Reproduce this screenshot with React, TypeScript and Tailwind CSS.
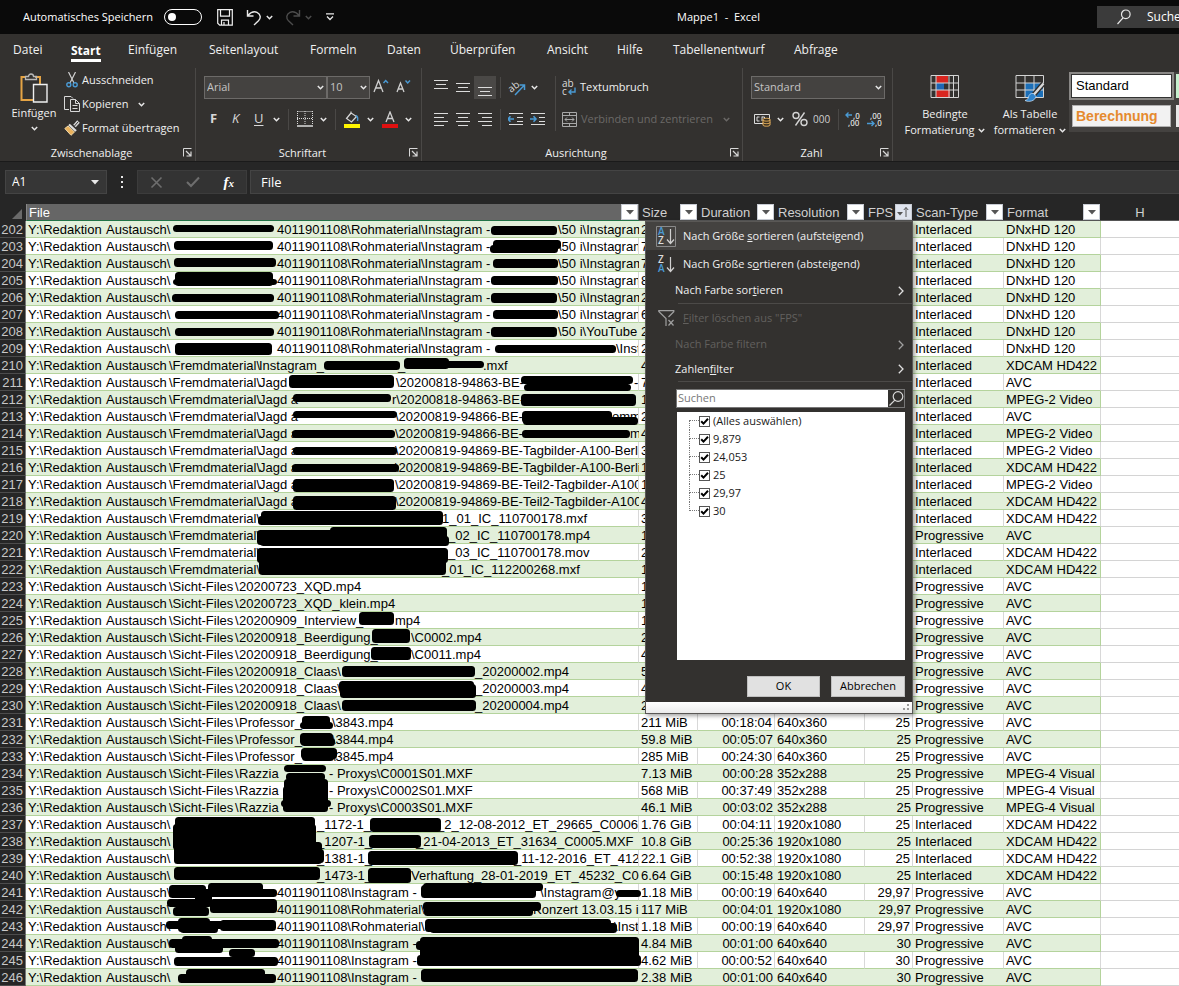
import { useState, type ReactNode } from "react";

/* ------------------------------------------------------------------ */
/* Data                                                                */
/* ------------------------------------------------------------------ */

// A path is kept as parts; the number is the x position a part starts at.
type Part = [number, string];
type Row = {
  n: number;
  file: Part[];
  size: string;
  dur?: string;
  res?: string;
  fps?: string;
  scan: string;
  format: string;
};

const DRIVE: Part = [28, "Y:\\Redaktion"];
const ROOT: Part[] = [DRIVE, [106, "Austausch\\"]];
const FREMD: Part[] = [DRIVE, [106, "Austausch"], [169, "\\Fremdmaterial\\"]];
const SICHT: Part[] = [DRIVE, [106, "Austausch"], [169, "\\Sicht-Files"], [235, "\\"]];
const CLIP: Part[] = [...ROOT, [277, "4011901108\\Rohmaterial"], [421, "\\Instagram -"]];
const INSTA: Part[] = [...ROOT, [277, "4011901108\\Instagram -"]];

const I = "Interlaced";
const P = "Progressive";
const DNX = "DNxHD 120";
const XD = "XDCAM HD422";
const MP2 = "MPEG-2 Video";
const MP4 = "MPEG-4 Visual";

const rows: Row[] = [
  { n: 202, file: [...CLIP, [558, "\\50 i\\Instagram"]], size: "2", scan: I, format: DNX },
  { n: 203, file: [...CLIP, [558, "\\50 i\\Instagram"]], size: "7", scan: I, format: DNX },
  { n: 204, file: [...CLIP, [558, "\\50 i\\Instagram"]], size: "7", scan: I, format: DNX },
  { n: 205, file: [...CLIP, [558, "\\50 i\\Instagram"]], size: "8", scan: I, format: DNX },
  { n: 206, file: [...CLIP, [558, "\\50 i\\Instagram"]], size: "2", scan: I, format: DNX },
  { n: 207, file: [...CLIP, [558, "\\50 i\\Instagram"]], size: "6", scan: I, format: DNX },
  { n: 208, file: [...CLIP, [558, "\\50 i\\YouTube"]], size: "2", scan: I, format: DNX },
  { n: 209, file: [...CLIP, [616, "\\Inst"]], size: "2", scan: I, format: DNX },
  { n: 210, file: [...FREMD, [259, "Instagram_"], [398, "_"], [483, ".mxf"]], size: "4", scan: I, format: XD },
  { n: 211, file: [...FREMD, [259, "Jagd"], [396, "\\20200818-94863-BE-"], [634, "-"]], size: "7", scan: I, format: "AVC" },
  { n: 212, file: [...FREMD, [259, "Jagd a"], [392, "r\\20200818-94863-BE-"], [633, "'"]], size: "1", scan: I, format: MP2 },
  { n: 213, file: [...FREMD, [259, "Jagd a"], [395, "\\20200819-94866-BE-"], [612, "omm"]], size: "2", scan: I, format: "AVC" },
  { n: 214, file: [...FREMD, [259, "Jagd a"], [395, "\\20200819-94866-BE-"], [630, "m"]], size: "4", scan: I, format: MP2 },
  { n: 215, file: [...FREMD, [259, "Jagd a"], [395, "\\20200819-94869-BE-Tagbilder-A100-Berli"]], size: "3", scan: I, format: MP2 },
  { n: 216, file: [...FREMD, [259, "Jagd a"], [395, "\\20200819-94869-BE-Tagbilder-A100-Berli"]], size: "1", scan: I, format: XD },
  { n: 217, file: [...FREMD, [259, "Jagd a"], [395, "\\20200819-94869-BE-Teil2-Tagbilder-A100"]], size: "1", scan: I, format: MP2 },
  { n: 218, file: [...FREMD, [259, "Jagd a"], [395, "\\20200819-94869-BE-Teil2-Tagbilder-A100"]], size: "4", scan: I, format: XD },
  { n: 219, file: [...FREMD, [442, "1_01_IC_110700178.mxf"]], size: "3", scan: I, format: XD },
  { n: 220, file: [...FREMD, [448, "_02_IC_110700178.mp4"]], size: "1", scan: P, format: "AVC" },
  { n: 221, file: [...FREMD, [448, "_03_IC_110700178.mov"]], size: "2", scan: I, format: XD },
  { n: 222, file: [...FREMD, [442, "_01_IC_112200268.mxf"]], size: "1", scan: I, format: XD },
  { n: 223, file: [...SICHT, [239, "20200723_XQD.mp4"]], size: "1", scan: P, format: "AVC" },
  { n: 224, file: [...SICHT, [239, "20200723_XQD_klein.mp4"]], size: "1", scan: P, format: "AVC" },
  { n: 225, file: [...SICHT, [239, "20200909_Interview_"], [395, "mp4"]], size: "1", scan: P, format: "AVC" },
  { n: 226, file: [...SICHT, [239, "20200918_Beerdigung_"], [411, "\\C0002.mp4"]], size: "2", scan: P, format: "AVC" },
  { n: 227, file: [...SICHT, [239, "20200918_Beerdigung_"], [411, "\\C0011.mp4"]], size: "4", scan: P, format: "AVC" },
  { n: 228, file: [...SICHT, [239, "20200918_Claas\\"], [475, "_20200002.mp4"]], size: "5", scan: P, format: "AVC" },
  { n: 229, file: [...SICHT, [239, "20200918_Claas\\"], [475, "_20200003.mp4"]], size: "4", scan: P, format: "AVC" },
  { n: 230, file: [...SICHT, [239, "20200918_Claas\\"], [475, "_20200004.mp4"]], size: "2", scan: P, format: "AVC" },
  { n: 231, file: [...SICHT, [239, "Professor_"], [332, "\\3843.mp4"]], size: "211 MiB", dur: "00:18:04", res: "640x360", fps: "25", scan: P, format: "AVC" },
  { n: 232, file: [...SICHT, [239, "Professor_"], [332, "\\3844.mp4"]], size: "59.8 MiB", dur: "00:05:07", res: "640x360", fps: "25", scan: P, format: "AVC" },
  { n: 233, file: [...SICHT, [239, "Professor_"], [332, "\\3845.mp4"]], size: "285 MiB", dur: "00:24:30", res: "640x360", fps: "25", scan: P, format: "AVC" },
  { n: 234, file: [...SICHT, [239, "Razzia"], [329, "- Proxys\\C0001S01.MXF"]], size: "7.13 MiB", dur: "00:00:28", res: "352x288", fps: "25", scan: P, format: MP4 },
  { n: 235, file: [...SICHT, [239, "Razzia"], [329, "- Proxys\\C0002S01.MXF"]], size: "568 MiB", dur: "00:37:49", res: "352x288", fps: "25", scan: P, format: MP4 },
  { n: 236, file: [...SICHT, [239, "Razzia"], [329, "- Proxys\\C0003S01.MXF"]], size: "46.1 MiB", dur: "00:03:02", res: "352x288", fps: "25", scan: P, format: MP4 },
  { n: 237, file: [...ROOT, [317, "_1172-1_"], [437, "_2_12-08-2012_ET_29665_C0006."]], size: "1.76 GiB", dur: "00:04:11", res: "1920x1080", fps: "25", scan: I, format: XD },
  { n: 238, file: [...ROOT, [317, "_1207-1_"], [416, "_21-04-2013_ET_31634_C0005.MXF"]], size: "10.8 GiB", dur: "00:25:36", res: "1920x1080", fps: "25", scan: I, format: XD },
  { n: 239, file: [...ROOT, [317, "_1381-1_"], [514, "_11-12-2016_ET_4128"]], size: "22.1 GiB", dur: "00:52:38", res: "1920x1080", fps: "25", scan: I, format: XD },
  { n: 240, file: [...ROOT, [317, "_1473-1_"], [411, "Verhaftung_28-01-2019_ET_45232_C00"]], size: "6.64 GiB", dur: "00:15:48", res: "1920x1080", fps: "25", scan: I, format: XD },
  { n: 241, file: [...INSTA, [540, "\\Instagram@y"]], size: "1.18 MiB", dur: "00:00:19", res: "640x640", fps: "29,97", scan: P, format: "AVC" },
  { n: 242, file: [...ROOT, [277, "4011901108\\Rohmaterial\\"], [533, "Konzert 13.03.15 i"]], size: "117 MiB", dur: "00:04:01", res: "1920x1080", fps: "29,97", scan: P, format: "AVC" },
  { n: 243, file: [...ROOT, [277, "4011901108\\Rohmaterial\\"], [614, "\\Inst"]], size: "1.18 MiB", dur: "00:00:19", res: "640x640", fps: "29,97", scan: P, format: "AVC" },
  { n: 244, file: INSTA, size: "4.84 MiB", dur: "00:01:00", res: "640x640", fps: "30", scan: P, format: "AVC" },
  { n: 245, file: INSTA, size: "4.62 MiB", dur: "00:00:52", res: "640x640", fps: "30", scan: P, format: "AVC" },
  { n: 246, file: INSTA, size: "2.38 MiB", dur: "00:01:00", res: "640x640", fps: "30", scan: P, format: "AVC" },
];

// Marker strokes: left, top, right, bottom.
const marks: [number, number, number, number][] = [
  [173, 225, 274, 232], [174, 241, 273, 250], [174, 258, 276, 267], [175, 272, 273, 286], [173, 279, 277, 285],
  [172, 294, 274, 302], [175, 311, 279, 319], [175, 328, 274, 336], [175, 343, 272, 355],
  [491, 226, 557, 235], [493, 240, 561, 249], [490, 245, 558, 253], [493, 259, 558, 268], [491, 276, 558, 285],
  [491, 293, 557, 303], [493, 310, 558, 319], [491, 327, 557, 337], [495, 345, 616, 353],
  [324, 361, 400, 370], [404, 358, 449, 369], [440, 361, 484, 368],
  [289, 375, 394, 388], [521, 376, 633, 384], [524, 384, 631, 391],
  [293, 394, 391, 402], [521, 394, 636, 406], [293, 411, 397, 418], [522, 411, 612, 423], [523, 417, 638, 425],
  [292, 430, 395, 438], [522, 430, 630, 438], [293, 447, 397, 455], [292, 464, 399, 472],
  [293, 479, 394, 492], [293, 496, 396, 510],
  [258, 516, 443, 525], [261, 511, 443, 522], [257, 530, 447, 545], [330, 527, 447, 540], [260, 536, 449, 546],
  [257, 548, 448, 563], [259, 555, 446, 575],
  [359, 612, 394, 625], [372, 629, 410, 643], [371, 647, 411, 660],
  [342, 666, 475, 677], [339, 681, 474, 692], [340, 684, 476, 698], [342, 700, 476, 711],
  [302, 716, 330, 729], [300, 722, 333, 729], [300, 733, 333, 745], [301, 738, 335, 746], [301, 748, 337, 759], [302, 752, 334, 761],
  [284, 765, 326, 772], [286, 773, 325, 781], [284, 779, 328, 794], [283, 786, 328, 812], [281, 800, 331, 807],
  [175, 817, 315, 832], [173, 824, 316, 850], [174, 842, 322, 864], [300, 849, 324, 863],
  [370, 818, 441, 832], [369, 835, 421, 848], [368, 851, 518, 865], [174, 867, 320, 880], [368, 868, 411, 883],
  [169, 885, 206, 898], [208, 883, 263, 892], [180, 889, 277, 897], [195, 893, 212, 905],
  [167, 899, 212, 907], [173, 907, 209, 916], [210, 899, 277, 913],
  [166, 921, 275, 929], [178, 918, 210, 932], [180, 925, 218, 933], [220, 920, 276, 931],
  [169, 939, 279, 948], [182, 936, 212, 946], [175, 945, 223, 953], [229, 949, 255, 957],
  [174, 957, 278, 966], [186, 969, 265, 981], [178, 974, 276, 983],
  [421, 885, 536, 898], [423, 883, 543, 891], [616, 890, 641, 897], [423, 902, 541, 911], [424, 904, 533, 916],
  [425, 919, 611, 932], [430, 923, 617, 933], [420, 937, 639, 965], [416, 941, 636, 950], [417, 955, 641, 966],
  [421, 969, 638, 982],
];

/* ------------------------------------------------------------------ */
/* Small drawings                                                      */
/* ------------------------------------------------------------------ */

function Chevron({ color = "#e8e8e8" }: { color?: string }) {
  return (
    <svg width="7" height="5" viewBox="0 0 7 5" fill="none" className="shrink-0" aria-hidden="true">
      <path d="M0.8 1 3.5 3.7 6.2 1" stroke={color} strokeWidth="1.5" />
    </svg>
  );
}

function Launcher({ label }: { label: string }) {
  return (
    <button aria-label={label} className="shrink-0">
      <svg width="9" height="9" viewBox="0 0 9 9" fill="none" stroke="#d8d8d8" aria-hidden="true">
        <path d="M.5 8.500V.5H8.500" />
        <path d="M3 3 7.500 7.500M8 3.500v4.500H3.500" strokeWidth="1.200" />
      </svg>
    </button>
  );
}

function Lines({ widths, align = "start", top = 2 }: { widths: number[]; align?: "start" | "mid" | "end"; top?: number }) {
  return (
    <svg width="14" height="16" viewBox="0 0 14 16" stroke="#dcdcdc" aria-hidden="true">
      {widths.map((w, i) => {
        const x = align === "start" ? 0 : align === "mid" ? (14 - w) / 2 : 14 - w;
        return <path key={i} d={`M${x} ${top + 0.5 + i * 4}h${w}`} />;
      })}
    </svg>
  );
}

function Cut() {
  return (
    <svg width="12" height="16" viewBox="0 0 12 16" fill="none" aria-hidden="true">
      <path d="M2.500 0 8 11M9.500 0 4 11" stroke="#d0d0d0" strokeWidth="1.200" />
      <circle cx="2.800" cy="12.800" r="2" stroke="#4a9ad4" strokeWidth="1.400" />
      <circle cx="9.200" cy="12.800" r="2" stroke="#4a9ad4" strokeWidth="1.400" />
    </svg>
  );
}

function Copy() {
  return (
    <svg width="16" height="16" viewBox="0 0 16 16" fill="none" stroke="#d8d8d8" aria-hidden="true">
      <path d="M5 13.500H.5V.5h6.500l2 2" />
      <path d="M6.500 3.500h5l4 4v8h-9zM11.500 3.500v4h4M8.500 9.500h5M8.500 12.500h5" />
    </svg>
  );
}

function Brush() {
  return (
    <svg width="16" height="16" viewBox="0 0 16 16" fill="none" aria-hidden="true">
      <path d="M14.500 1.500 10.500 6" stroke="#d8d8d8" strokeWidth="3.400" />
      <path d="M14.300 1.700 10.500 6" stroke="#33312f" strokeWidth="1" />
      <path d="M5 4.500 12 11" stroke="#e0e0e0" strokeWidth="2.200" />
      <path d="M4 6 .8 8.500 7 15.300 10.500 12z" fill="#e9b15c" stroke="#f0d8a8" />
    </svg>
  );
}

function Paste() {
  return (
    <svg width="28" height="32" viewBox="0 0 28 32" fill="none" aria-hidden="true">
      <path d="M6 5H1.500v23H13M15 5h5v7" stroke="#e5a445" strokeWidth="2" />
      <path d="M5.500 7.500v-3h3a2.500 2.500 0 0 1 5 0h3v3z" stroke="#b8b8b8" strokeWidth="1.300" />
      <path d="M13.500 12.500h13.500v17.500H13.500z" fill="#3a3836" stroke="#f0f0f0" strokeWidth="1.400" />
    </svg>
  );
}

function TableIcon({ brush }: { brush?: boolean }) {
  return (
    <svg width="30" height="29" viewBox="0 0 30 29" fill="none" aria-hidden="true">
      {brush ? (
        <path d="M10 9h18v14H10z" fill="#1c6fb8" />
      ) : (
        <>
          <path d="M6 1.500h12V9H6zM6 16h14v7.500H6z" fill="#d8251f" />
          <path d="M6 9h8v7H6z" fill="#1e66b4" />
        </>
      )}
      <path d="M1 1.500h27.500v22H1zM1 9h27.500M1 16h27.500" stroke="#d4d4d4" />
      <path d={brush ? "M10 1.500v22M19 1.500v22" : "M6 1.500v22M19 1.500v22M23.500 1.500v22"} stroke="#d4d4d4" />
      {brush && (
        <>
          <path d="M28.500 9.500 19 20.500" stroke="#2f2d2c" strokeWidth="5" />
          <path d="M28.500 9.500 18.500 21" stroke="#d9d9d9" strokeWidth="2.400" />
          <path d="M18.500 19.500c-3-.5-4.500 1-5 3.500-.4 2-1.500 3-3.500 3.500 4 2 10 .5 11-4z" fill="#2f83cc" stroke="#cfe3f5" strokeWidth=".7" />
        </>
      )}
    </svg>
  );
}

function SortIcon({ first, second, boxed }: { first: string; second: string; boxed?: boolean }) {
  return (
    <svg width="20" height="21" viewBox="0 0 20 21" fill="none" aria-hidden="true" className="overflow-visible" fontFamily="Open Sans, sans-serif" fontSize="10" fontWeight="600">
      {boxed && <path d="M.5.5h19v20H.5z" stroke="#8a8a8a" />}
      <text x="2" y="9" fill={first === "A" ? "#4a9ad4" : "#dcdcdc"}>{first}</text>
      <text x="2" y="18" fill={second === "A" ? "#4a9ad4" : "#dcdcdc"}>{second}</text>
      <path d="M14.500 3v14M11 13.500l3.500 4 3.500-4" stroke="#d0d0d0" strokeWidth="1.200" />
    </svg>
  );
}

/* ------------------------------------------------------------------ */
/* Ribbon                                                              */
/* ------------------------------------------------------------------ */

function TitleBar() {
  return (
    <header className="flex h-[34px] items-center bg-[#0a0a0a] pl-[23px] text-white">
      <div className="flex w-[317px] shrink-0 items-center">
        <label htmlFor="autosave" className="w-[141px] whitespace-nowrap">Automatisches Speichern</label>
        <span className="relative flex h-4 w-[38px] items-center">
          <input id="autosave" type="checkbox" role="switch" className="h-4 w-[38px] appearance-none rounded-full border border-white" />
          <span className="pointer-events-none absolute left-1 h-2 w-2 rounded-full bg-white" />
        </span>
        <button aria-label="Speichern" className="ml-[15px]">
          <svg width="16" height="17" viewBox="0 0 16 17" fill="none" stroke="#f0f0f0" strokeWidth="1.200" aria-hidden="true">
            <path d="M.7.7h14.600v15.500H2.700l-2-2zM3.500.7v6.500h9V.7M4.500 16.200v-5h7v5M7 16v-3" />
          </svg>
        </button>
        <button aria-label="Rückgängig" className="ml-[13px] flex items-center gap-1">
          <svg width="16" height="17" viewBox="0 0 16 17" fill="none" stroke="#e8e8e8" strokeWidth="1.400" aria-hidden="true">
            <path d="M1.500 1v6h6M1.800 6.500C5 3 8 2 11 3.300c4 2 4 6 1.500 8.500L8 16" />
          </svg>
          <Chevron />
        </button>
        <button aria-label="Wiederholen" className="ml-3 flex items-center gap-1">
          <svg width="16" height="17" viewBox="0 0 16 17" fill="none" stroke="#4c4c4c" strokeWidth="1.400" aria-hidden="true">
            <path d="M14.500 1v6h-6M14.200 6.500C11 3 8 2 5 3.300c-4 2-4 6-1.500 8.500L8 16" />
          </svg>
          <Chevron color="#4c4c4c" />
        </button>
        <button aria-label="Symbolleiste anpassen" className="ml-[14px]">
          <svg width="8" height="8" viewBox="0 0 8 8" fill="none" stroke="#e8e8e8" strokeWidth="1.300" aria-hidden="true">
            <path d="M0 .8h8M1 3.500l3 3 3-3" />
          </svg>
        </button>
      </div>
      <h1 className="flex-1 whitespace-pre text-center">Mappe1&nbsp; -&nbsp; Excel</h1>
      <button className="flex h-[22px] w-[82px] shrink-0 items-center gap-4 overflow-hidden bg-[#3b3b3b] pl-5">
        <svg width="14" height="16" viewBox="0 0 14 16" fill="none" stroke="#e8e8e8" strokeWidth="1.200" className="shrink-0" aria-hidden="true">
          <circle cx="8.800" cy="5.300" r="4.300" />
          <path d="M6 8.800.5 15" />
        </svg>
        <span className="text-[12px]">Suche</span>
      </button>
    </header>
  );
}

const tabs = ["Datei", "Start", "Einfügen", "Seitenlayout", "Formeln", "Daten", "Überprüfen", "Ansicht", "Hilfe", "Tabellenentwurf", "Abfrage"];

function Tabs() {
  return (
    <nav className="grid h-8 grid-cols-[58px_57px_81px_101px_77px_63px_97px_70px_56px_121px_auto] items-center justify-start pl-[13px] text-[12px] text-[#f0f0f0]">
      {tabs.map((t) => (
        <button key={t} className="justify-self-start whitespace-nowrap leading-[18px]">
          {t === "Start" ? (
            <span className="block border-b-[3px] border-white pt-[3px] font-bold leading-[17px] text-white">{t}</span>
          ) : (
            t
          )}
        </button>
      ))}
    </nav>
  );
}

function Group({ title, className, children }: { title: string; className: string; children: ReactNode }) {
  return (
    <section aria-label={title} className={`flex shrink-0 flex-col border-r border-[#4a4846] ${className}`}>
      <div className="h-[76px] shrink-0">{children}</div>
      <div className="flex h-[17px] shrink-0 items-center pr-[3px]">
        <span className="flex-1 text-center leading-[17px]">{title}</span>
        <Launcher label={`${title}: Optionen`} />
      </div>
    </section>
  );
}

function Combo({ label, value, className }: { label: string; value: string; className: string }) {
  return (
    <span className={`relative flex h-[23px] shrink-0 items-center ${className}`}>
      <select aria-label={label} defaultValue={value} className="h-full w-full appearance-none border border-[#6c6a68] bg-[#444240] pl-[2px] text-[#c4c4c4]">
        <option>{value}</option>
      </select>
      <span className="pointer-events-none absolute right-[3px]"><Chevron /></span>
    </span>
  );
}

function Sep() {
  return <span className="block h-[21px] w-px shrink-0 bg-[#4a4846]" />;
}

function Ribbon() {
  return (
    <div className="flex h-[95px] overflow-hidden pt-[2px] text-[#f0f0f0]">
      <Group title="Zwischenablage" className="w-[196px]">
        <div className="flex">
          <button className="flex w-16 shrink-0 flex-col items-center pl-1 pt-1">
            <Paste />
            <span className="leading-[18px]">Einfügen</span>
            <span className="flex h-3 items-center"><Chevron /></span>
          </button>
          <div className="flex flex-col items-start">
            <button className="flex h-6 items-center gap-1 pl-[2px] whitespace-nowrap"><Cut />Ausschneiden</button>
            <button className="flex h-6 items-center gap-[2px] whitespace-nowrap"><Copy />Kopieren<span className="pl-2"><Chevron /></span></button>
            <button className="flex h-6 items-center gap-[2px] whitespace-nowrap"><Brush />Format übertragen</button>
          </div>
        </div>
      </Group>

      <Group title="Schriftart" className="w-[226px]">
        <div className="flex items-start pl-2 pt-2">
          <Combo label="Schriftart" value="Arial" className="w-[123px]" />
          <Combo label="Schriftgrad" value="10" className="w-[43px]" />
          <button aria-label="Schriftgrad vergrößern" className="ml-[3px]">
            <svg width="16" height="20" viewBox="0 0 16 20" fill="none" aria-hidden="true">
              <path d="M1 16 5.500 4.500 10 16M2.600 12h5.800" stroke="#d0d0d0" strokeWidth="1.300" />
              <path d="M10.500 7l2.200-2.500L15 7" stroke="#4a9ad4" strokeWidth="1.400" />
            </svg>
          </button>
          <button aria-label="Schriftgrad verkleinern" className="ml-[7px]">
            <svg width="16" height="20" viewBox="0 0 16 20" fill="none" aria-hidden="true">
              <path d="M1 16 4.500 7 8 16M2.300 13h4.400" stroke="#d0d0d0" strokeWidth="1.300" />
              <path d="M9.500 4.500 11.700 7 14 4.500" stroke="#4a9ad4" strokeWidth="1.400" />
            </svg>
          </button>
        </div>
        <div className="flex h-10 items-center text-[13px] text-[#d8d8d8]">
          <button aria-label="Fett" className="w-9 pl-[14px] text-left font-bold">F</button>
          <button aria-label="Kursiv" className="w-[22px] text-left italic">K</button>
          <button aria-label="Unterstrichen" className="flex w-[26px] items-center justify-between"><span className="underline underline-offset-2">U</span><Chevron /></button>
          <span className="ml-2"><Sep /></span>
          <button aria-label="Rahmen" className="ml-2 flex items-center gap-[7px]">
            <svg width="16" height="16" viewBox="0 0 16 16" fill="none" stroke="#dcdcdc" aria-hidden="true">
              <path d="M.5.500H16M.5 0v14M15.500 0v14M8 0v14M0 7.500h16" strokeDasharray="1 1" />
              <path d="M0 15h16" strokeWidth="1.500" />
            </svg>
            <Chevron />
          </button>
          <span className="ml-2"><Sep /></span>
          <button aria-label="Füllfarbe" className="ml-2 flex items-center gap-[7px]">
            <svg width="16" height="17" viewBox="0 0 16 17" fill="none" aria-hidden="true">
              <path d="M7 2 2.500 7.500 7.500 11l5-5.500L7 2V.5" stroke="#d8d8d8" strokeWidth="1.200" />
              <path d="M12 4.500c2 1 2 3 1.500 5.500" stroke="#4a9ad4" strokeWidth="1.400" />
              <path d="M0 13h16v4H0z" fill="#fff500" />
            </svg>
            <Chevron />
          </button>
          <button aria-label="Schriftfarbe" className="ml-2 flex items-center gap-[7px]">
            <svg width="16" height="17" viewBox="0 0 16 17" fill="none" aria-hidden="true">
              <path d="M4 11 8 1l4 10M5.300 7.500h5.400" stroke="#d0d0d0" strokeWidth="1.300" />
              <path d="M0 13h16v4H0z" fill="#e01010" />
            </svg>
            <Chevron />
          </button>
        </div>
      </Group>

      <Group title="Ausrichtung" className="w-[321px]">
        <div className="flex pt-2">
          <div className="flex flex-col pl-2">
            <div className="flex h-[23px] items-center">
              <button aria-label="Oben ausrichten" className="flex h-[23px] w-[22px] items-center justify-center"><Lines widths={[14, 10, 14]} align="mid" top={0} /></button>
              <button aria-label="Zentriert ausrichten" className="flex h-[23px] w-[22px] items-center justify-center"><Lines widths={[14, 10, 14]} align="mid" top={3} /></button>
              <button aria-label="Unten ausrichten" aria-pressed="true" className="flex h-[23px] w-[22px] items-center justify-center bg-[#4a4846]"><Lines widths={[14, 10, 14]} align="mid" top={7} /></button>
              <span className="mx-1"><Sep /></span>
              <button aria-label="Ausrichtung" className="flex items-center gap-[5px] pl-1">
                <svg width="17" height="16" viewBox="0 0 17 16" fill="none" aria-hidden="true" className="overflow-visible">
                  <text x="0" y="11" fontSize="10" fontFamily="Open Sans, sans-serif" fill="#dcdcdc" transform="rotate(-38 4 9)">ab</text>
                  <path d="M6 15 15 5.500M10.500 5h5v5" stroke="#4a9ad4" strokeWidth="1.500" />
                </svg>
                <Chevron />
              </button>
            </div>
            <div className="mt-2 flex h-6 items-center">
              <button aria-label="Linksbündig" className="flex w-[22px] justify-center"><Lines widths={[14, 10, 14, 10]} /></button>
              <button aria-label="Zentriert" className="flex w-[22px] justify-center"><Lines widths={[14, 10, 14, 10]} align="mid" /></button>
              <button aria-label="Rechtsbündig" className="flex w-[22px] justify-center"><Lines widths={[14, 10, 14, 10]} align="end" /></button>
              <span className="mx-1"><Sep /></span>
              {["M6 8H0M2.500 5.200 0 8l2.500 2.800", "M0 8h6M3.500 5.200 6 8 3.500 10.800"].map((d, i) => (
                <button key={d} aria-label={i ? "Einzug vergrößern" : "Einzug verkleinern"} className="flex w-[22px] justify-center">
                  <svg width="16" height="16" viewBox="0 0 16 16" fill="none" aria-hidden="true">
                    <path d="M1 2.500h14M9 6.500h6M9 10.500h6M1 13.500h14" stroke="#dcdcdc" />
                    <path d={d} stroke="#4a9ad4" strokeWidth="1.600" />
                  </svg>
                </button>
              ))}
            </div>
          </div>
          <div className="ml-[6px] flex flex-col border-l border-[#4a4846] pl-[6px]">
            <button className="flex h-[23px] items-center gap-1 whitespace-nowrap">
              <svg width="14" height="18" viewBox="0 0 14 18" fill="none" aria-hidden="true" className="overflow-visible" fontFamily="Open Sans, sans-serif" fontSize="10">
                <text x="0" y="8" fill="#dcdcdc">ab</text>
                <text x="0" y="16" fill="#dcdcdc">c</text>
                <path d="M13 8.500v4.500H7M9.500 10.500 7 13l2.500 2.500" stroke="#4a9ad4" strokeWidth="1.400" />
              </svg>
              Textumbruch
            </button>
            <button disabled className="mt-2 flex h-6 items-center gap-1 whitespace-nowrap text-[#6b6967]">
              <svg width="15" height="15" viewBox="0 0 15 15" fill="none" stroke="#a8a8a8" aria-hidden="true">
                <path d="M.5.500h14v14H.5zM.5 3.500h14M.5 11.500h14M7.500 .5v3M7.500 11.500v3M3 7.500h9M5 5.500l-2 2 2 2M10 5.500l2 2-2 2" />
              </svg>
              Verbinden und zentrieren
              <span className="pl-[6px]"><Chevron color="#6b6967" /></span>
            </button>
          </div>
        </div>
      </Group>

      <Group title="Zahl" className="w-[150px]">
        <div className="pl-2 pt-2">
          <Combo label="Zahlenformat" value="Standard" className="w-[134px]" />
          <div className="mt-2 flex h-6 items-center">
            <button aria-label="Buchhaltung" className="flex items-center gap-[6px] pl-[3px]">
              <svg width="17" height="15" viewBox="0 0 17 15" fill="none" aria-hidden="true">
                <path d="M.5 2.500h15v9H.5z" stroke="#dcdcdc" />
                <path d="M5.500 5H3v4h2.500M8 5h2.500v1.500M8 4.500V9" stroke="#dcdcdc" />
                <path d="M9 7.500c0-1.600 7-1.600 7 0v5.500c0 1.600-7 1.600-7 0z" fill="#3a3020" stroke="#e9b15c" />
                <path d="M9 8c0 1.500 7 1.500 7 0M9 10.500c0 1.500 7 1.500 7 0" stroke="#e9b15c" />
              </svg>
              <Chevron />
            </button>
            <button aria-label="Prozentformat" className="ml-2">
              <svg width="16" height="16" viewBox="0 0 16 16" fill="none" stroke="#d4d4d4" strokeWidth="1.400" aria-hidden="true">
                <circle cx="4" cy="4.500" r="3" /><circle cx="12" cy="11.500" r="3" /><path d="M12.500 1.500l-9 13" />
              </svg>
            </button>
            <button aria-label="1.000er-Trennzeichen" className="ml-[5px] text-[10px] text-[#d0d0d0]">000</button>
            <span className="ml-2"><Sep /></span>
            <button aria-label="Dezimalstelle hinzufügen" className="ml-[6px]">
              <svg width="16" height="17" viewBox="0 0 16 17" fill="none" aria-hidden="true" className="overflow-visible" fontFamily="Open Sans, sans-serif" fontSize="8" fontWeight="600">
                <path d="M7 4H1M3.500 1.500 1 4l2.500 2.500" stroke="#4a9ad4" strokeWidth="1.400" />
                <text x="8" y="8" fill="#dcdcdc">,0</text><text x="3" y="15" fill="#dcdcdc">,00</text>
              </svg>
            </button>
            <button aria-label="Dezimalstelle löschen" className="ml-[6px]">
              <svg width="16" height="17" viewBox="0 0 16 17" fill="none" aria-hidden="true" className="overflow-visible" fontFamily="Open Sans, sans-serif" fontSize="8" fontWeight="600">
                <path d="M0 12.500h7M4.500 10 7 12.500 4.500 15" stroke="#4a9ad4" strokeWidth="1.400" />
                <text x="3" y="8" fill="#dcdcdc">,00</text><text x="8" y="15" fill="#dcdcdc">,0</text>
              </svg>
            </button>
          </div>
        </div>
      </Group>

      <section aria-label="Formatvorlagen" className="flex flex-1 pl-1 pt-1">
        <button className="flex w-24 shrink-0 flex-col items-center pt-[2px] leading-[16px]">
          <span className="h-[32px]"><TableIcon /></span>
          <span>Bedingte</span>
          <span className="flex items-center gap-1 whitespace-nowrap">Formatierung <Chevron /></span>
        </button>
        <button className="flex w-[74px] shrink-0 flex-col items-center pt-[2px] leading-[16px]">
          <span className="h-[32px]"><TableIcon brush /></span>
          <span className="whitespace-nowrap">Als Tabelle</span>
          <span className="flex items-center gap-1 whitespace-nowrap">formatieren <Chevron /></span>
        </button>
        <div className="ml-[2px] grid h-[60px] w-[140px] shrink-0 grid-cols-[105px_30px] gap-x-[2px] bg-[#444240] font-['Liberation_Sans',Arial,sans-serif]">
          <button className="h-[28px] border-2 border-[#8a8886] bg-white pl-[5px] text-left text-[13px] text-black ring-1 ring-inset ring-[#333]">Standard</button>
          <span className="my-[2px] h-6 bg-[#c6efce]" />
          <button className="mx-[3px] my-px h-[22px] border border-[#b0b0b0] bg-[#f2f2f2] pl-[3px] text-left text-[14px] font-bold leading-[18px] text-[#e58a2e]">Berechnung</button>
          <span className="my-px h-[22px] bg-[#e8e8e8]" />
        </div>
      </section>
    </div>
  );
}

function FormulaBar() {
  return (
    <div className="flex h-[43px] items-start border-t border-[#1a1a1a] bg-[#262626] pt-2 text-[12px] text-white">
      <div className="ml-[5px] flex h-6 w-[102px] shrink-0 items-center border border-[#444] bg-[#363636] pr-[7px]">
        <input aria-label="Namenfeld" defaultValue="A1" className="w-0 flex-1 bg-transparent pl-[6px] outline-none" />
        <svg width="8" height="5" viewBox="0 0 8 5" aria-hidden="true"><path d="M0 0h8L4 4.500z" fill="#e8e8e8" /></svg>
      </div>
      <svg width="30" height="24" viewBox="0 0 30 24" fill="#e8e8e8" aria-hidden="true" className="shrink-0">
        <path d="M14 6h2v2h-2zM14 11h2v2h-2zM14 16h2v2h-2z" />
      </svg>
      <div className="flex h-6 w-[110px] shrink-0 items-center justify-between border border-[#3c3c3c] bg-[#333] px-3">
        <button aria-label="Abbrechen">
          <svg width="13" height="13" viewBox="0 0 13 13" stroke="#6e6e6e" strokeWidth="1.600" aria-hidden="true"><path d="M1.500 1.500l10 10M11.500 1.500l-10 10" /></svg>
        </button>
        <button aria-label="Eingeben">
          <svg width="14" height="12" viewBox="0 0 14 12" fill="none" stroke="#6e6e6e" strokeWidth="2" aria-hidden="true"><path d="M1 6l4 4L13 1.500" /></svg>
        </button>
        <button aria-label="Funktion einfügen" className="font-['Liberation_Serif',serif] text-[15px] font-bold italic leading-none">
          f<span className="text-[11px]">x</span>
        </button>
      </div>
      <input aria-label="Bearbeitungsleiste" defaultValue="File" className="ml-[3px] h-6 w-0 flex-1 border border-r-0 border-[#444] bg-[#363636] pl-[10px] text-[13px] outline-none" />
    </div>
  );
}

/* ------------------------------------------------------------------ */
/* Sheet                                                               */
/* ------------------------------------------------------------------ */

function FilterButton({ label, sorted }: { label: string; sorted?: boolean }) {
  return (
    <button aria-label={`${label} filtern`} className={`mr-px flex h-4 w-[17px] shrink-0 items-center justify-center border border-[#c8ccd4] ${sorted ? "bg-[#dfe4ee]" : "bg-white"}`}>
      {sorted ? (
        <svg width="13" height="12" viewBox="0 0 13 12" fill="none" aria-hidden="true">
          <path d="M0 6h6L3 9.500z" fill="#555" />
          <path d="M9 11V1.500M6.800 4 9 1.500 11.200 4" stroke="#555" />
        </svg>
      ) : (
        <svg width="8" height="5" viewBox="0 0 8 5" aria-hidden="true"><path d="M0 0h8L4 4.500z" fill="#555" /></svg>
      )}
    </button>
  );
}

function PathParts({ parts }: { parts: Part[] }) {
  return (
    <div className="flex overflow-hidden whitespace-pre pl-[2px]">
      {parts.map(([x, text], i) => {
        const next = parts[i + 1];
        return (
          <span key={i} className="shrink-0" style={next ? { width: next[0] - x } : undefined}>
            {text}
          </span>
        );
      })}
    </div>
  );
}

const columns = ["Size", "Duration", "Resolution", "FPS", "Scan-Type", "Format"];

function Sheet() {
  return (
    <div className="relative overflow-hidden font-['Liberation_Sans',Arial,sans-serif] text-[13px]">
      <table className="w-full table-fixed border-separate border-spacing-0 leading-[15px] text-black">
        <colgroup>
          <col className="w-[26px]" />
          <col className="w-[613px]" />
          <col className="w-[59px]" />
          <col className="w-[77px]" />
          <col className="w-[90px]" />
          <col className="w-[48px]" />
          <col className="w-[91px]" />
          <col className="w-[97px]" />
          <col />
        </colgroup>
        <thead className="bg-[#262626] text-[#d0d0d0]">
          <tr className="h-[17px]">
            <th className="p-0" aria-label="Alle auswählen">
              <svg width="26" height="16" viewBox="0 0 26 16" aria-hidden="true" className="block"><path d="M22 4v10H12z" fill="#6a6a6a" /></svg>
            </th>
            <th className="border-b border-l border-b-[#217346] border-l-[#888] bg-[#666] p-0 font-normal text-white">
              <span className="flex items-center justify-between pl-[2px]">File<FilterButton label="File" /></span>
            </th>
            {columns.map((c) => (
              <th key={c} className="border-b border-[#555] p-0 font-normal">
                <span className="flex items-center justify-between pl-[3px]">{c}<FilterButton label={c} sorted={c === "FPS"} /></span>
              </th>
            ))}
            <th className="border-b border-[#555] p-0 text-center font-normal">H</th>
          </tr>
        </thead>
        <tbody>
          {rows.map((r, i) => {
            const band = i % 2 === 0;
            const cell = band
              ? "p-0 pt-px border-b border-[#b4d39c] bg-[#e2efda]"
              : "p-0 pt-px border-b border-b-[#b4d39c] border-r border-r-[#d8d8d8] bg-white";
            return (
              <tr key={r.n} className="h-[17px]">
                <th className="border-b border-r border-b-[#4c4c4c] border-r-[#777] bg-[#262626] p-0 pr-[2px] pt-px text-right font-normal text-[#c8c8c8]">{r.n}</th>
                <td className={cell}><PathParts parts={r.file} /></td>
                <td className={cell}><span className="block pl-[2px]">{r.size}</span></td>
                <td className={cell}><span className="block pr-[2px] text-right">{r.dur}</span></td>
                <td className={cell}><span className="block pl-[2px]">{r.res}</span></td>
                <td className={cell}><span className="block pr-[2px] text-right">{r.fps}</span></td>
                <td className={cell}><span className="block pl-[2px]">{r.scan}</span></td>
                <td className={`${cell} whitespace-nowrap border-r border-r-[#b4d39c]`}><span className="block pl-[2px]">{r.format}</span></td>
                <td className="border-b border-[#d4d4d4] bg-white p-0" />
              </tr>
            );
          })}
        </tbody>
      </table>

      <svg width="642" height="782" viewBox="0 204 642 782" className="pointer-events-none absolute left-0 top-0" aria-hidden="true">
        {marks.map(([l, t, r, b], i) => (
          <rect key={i} x={l} y={t} width={r - l} height={b - t} rx="3.500" fill="#000" />
        ))}
      </svg>

      <FilterMenu />
    </div>
  );
}

/* ------------------------------------------------------------------ */
/* Filter menu                                                         */
/* ------------------------------------------------------------------ */

function Arrow({ color = "#e0e0e0" }: { color?: string }) {
  return (
    <svg width="6" height="10" viewBox="0 0 6 10" fill="none" stroke={color} strokeWidth="1.300" aria-hidden="true">
      <path d="M.8.8 5 5 .8 9.200" />
    </svg>
  );
}

const values = ["(Alles auswählen)", "9,879", "24,053", "25", "29,97", "30"];

function FilterMenu() {
  const [checked, setChecked] = useState<boolean[]>(values.map(() => true));
  const toggle = (i: number) => setChecked((c) => c.map((v, k) => (k === i ? !v : v)));

  return (
    <div role="dialog" aria-label="FPS filtern" className="absolute left-[645px] top-[17px] w-[268px] border border-[#5a5856] bg-[#33312f] font-['Open_Sans','Noto_Sans',sans-serif] text-[11px] text-[#f0f0f0] shadow-[2px_2px_4px_rgba(0,0,0,0.35)]">
      <button className="flex h-7 w-full items-center gap-[7px] whitespace-nowrap bg-[#444240] pl-[10px]">
        <SortIcon first="A" second="Z" boxed />
        <span>Nach Größe <u>s</u>ortieren (aufsteigend)</span>
      </button>
      <button className="flex h-7 w-full items-center gap-[7px] whitespace-nowrap pl-[10px]">
        <SortIcon first="Z" second="A" />
        <span>Nach Größe s<u>o</u>rtieren (absteigend)</span>
      </button>
      <button className="flex h-[25px] w-full items-center justify-between pl-[29px] pr-2">
        <span>Nach Farbe sor<u>t</u>ieren</span><Arrow />
      </button>
      <hr className="ml-8 border-[#4c4a48]" />
      <button disabled className="flex h-7 w-full items-center gap-2 pl-3 text-[#62605e]">
        <svg width="17" height="17" viewBox="0 0 17 17" fill="none" stroke="#a0a0a0" strokeWidth="1.200" aria-hidden="true">
          <path d="M8 16V8.500L.8 1.500V.7h15v1L10.500 7M10.500 10l5 5.500M15.500 10l-5 5.500" />
        </svg>
        <span><u>F</u>ilter löschen aus "FPS"</span>
      </button>
      <button disabled className="flex h-[25px] w-full items-center justify-between pl-[29px] pr-2 text-[#62605e]">
        <span>Nach Farbe f<u>i</u>ltern</span><Arrow color="#a0a0a0" />
      </button>
      <button className="flex h-6 w-full items-center justify-between pl-[29px] pr-2">
        <span>Zahlen<u>f</u>ilter</span><Arrow />
      </button>
      <hr className="ml-8 border-[#4c4a48]" />
      <div className="ml-[30px] mr-[7px] mt-[7px] flex h-[19px] border border-[#777]">
        <input aria-label="Suchen" placeholder="Suchen" className="w-0 flex-1 bg-white pl-px text-black outline-none placeholder:text-[#777]" />
        <button aria-label="Suche starten" className="flex w-4 items-center justify-center">
          <svg width="15" height="15" viewBox="0 0 15 15" fill="none" stroke="#d8d8d8" strokeWidth="1.200" aria-hidden="true">
            <circle cx="9" cy="5.500" r="4.800" /><path d="M5.800 9.200.5 14.500" />
          </svg>
        </button>
      </div>
      <ul className="ml-[31px] mr-[7px] mt-1 h-[248px] bg-white pl-3 text-[#1a1a1a]">
        {values.map((v, i) => (
          <li key={v} className="flex h-[18px] items-center">
            <span className="flex w-[10px] flex-col">
              <span className={`h-[9px] border-b border-dotted border-[#777] ${i > 0 ? "border-l" : ""}`} />
              <span className={`h-[9px] border-dotted border-[#777] ${i < values.length - 1 ? "border-l" : ""}`} />
            </span>
            <span className="relative flex h-[11px] w-[11px] items-center justify-center">
              <input id={`fps-${i}`} type="checkbox" checked={checked[i]} onChange={() => toggle(i)} className="h-[11px] w-[11px] appearance-none border border-[#555] bg-white" />
              {checked[i] && (
                <svg width="9" height="9" viewBox="0 0 9 9" fill="none" className="pointer-events-none absolute" aria-hidden="true">
                  <path d="M1.200 4.200 3.500 6.600 8 1.800" stroke="#000" strokeWidth="2" />
                </svg>
              )}
            </span>
            <label htmlFor={`fps-${i}`} className="pl-[3px] leading-[18px]">{v}</label>
          </li>
        ))}
      </ul>
      <div className="flex justify-end gap-[11px] pb-[5px] pr-[7px] pt-4 text-black">
        <button className="h-[21px] w-[73px] border border-[#c0c0c0] bg-[#e1e1e1]">OK</button>
        <button className="h-[21px] w-[74px] border border-[#c0c0c0] bg-[#e1e1e1]">Abbrechen</button>
      </div>
      <div className="flex h-[11px] items-end justify-end bg-gradient-to-b from-white to-[#ececec] p-[2px]">
        <svg width="8" height="7" viewBox="0 0 8 7" fill="#999" aria-hidden="true"><path d="M5 0h2v2H5zM5 4h2v2H5zM1 4h2v2H1z" /></svg>
      </div>
    </div>
  );
}

export default function App() {
  return (
    <div className="min-h-screen w-full overflow-hidden bg-[#33312f] font-['Open_Sans','Noto_Sans',sans-serif] text-[11px]">
      <TitleBar />
      <Tabs />
      <Ribbon />
      <FormulaBar />
      <Sheet />
    </div>
  );
}
